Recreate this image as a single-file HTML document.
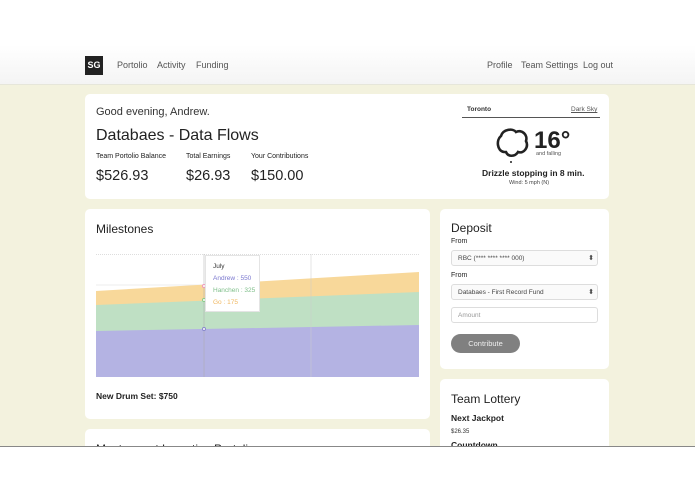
<!DOCTYPE html>
<html><head><meta charset="utf-8"><style>
*{margin:0;padding:0;box-sizing:border-box}
body{width:695px;height:494px;overflow:hidden;background:#fff;font-family:"Liberation Sans",sans-serif;color:#333;position:relative}
.a{position:absolute;white-space:nowrap}
.nav{left:0;top:45px;width:695px;height:40px;background:linear-gradient(#fff,#f4f4f4);border-bottom:1px solid #e6e6da}
.bg{left:0;top:85px;width:695px;height:361px;background:#f3f2de}
.card{background:#fff;border-radius:5px}
.nl{font-size:9px;color:#555;top:60px}
.lbl{font-size:7px;color:#222}
.sel{left:451px;width:147px;height:16px;border:1px solid #ddd;border-radius:3px;font-size:6.5px;padding:4px 6px;color:#444;background:#fafafa}
.sel:after{content:"⬍";position:absolute;right:3px;top:3px;font-size:7px}
</style></head><body>
<div class="a nav"></div>
<div class="a" style="left:85px;top:56px;width:18px;height:19px;background:#222;color:#fff;font-weight:bold;font-size:9px;text-align:center;line-height:19px">SG</div>
<div class="a nl" style="left:117px">Portolio</div>
<div class="a nl" style="left:157px">Activity</div>
<div class="a nl" style="left:196px">Funding</div>
<div class="a nl" style="left:487px">Profile</div>
<div class="a nl" style="left:521px">Team Settings</div>
<div class="a nl" style="left:583px">Log out</div>
<div class="a bg"></div>

<div class="a card" style="left:85px;top:94px;width:524px;height:105px"></div>
<div class="a" style="left:96px;top:106px;font-size:11px">Good evening, Andrew.</div>
<div class="a" style="left:96px;top:127px;font-size:16px;color:#222">Databaes - Data Flows</div>
<div class="a lbl" style="left:96px;top:153px">Team Portolio Balance</div>
<div class="a lbl" style="left:186px;top:153px">Total Earnings</div>
<div class="a lbl" style="left:251px;top:153px">Your Contributions</div>
<div class="a" style="left:96px;top:168px;font-size:14.5px;color:#222">$526.93</div>
<div class="a" style="left:186px;top:168px;font-size:14.5px;color:#222">$26.93</div>
<div class="a" style="left:251px;top:168px;font-size:14.5px;color:#222">$150.00</div>
<div class="a" style="left:462px;top:105px;width:138px;height:13px;border-bottom:1px solid #555"></div>
<div class="a" style="left:467px;top:106px;font-size:6.5px;font-weight:bold">Toronto</div>
<div class="a" style="left:571px;top:106px;font-size:6.5px;text-decoration:underline;color:#555">Dark Sky</div>
<svg class="a" style="left:494px;top:126px" width="36" height="40" viewBox="0 0 36 40"><path d="M10 26 C3 25 2 14 7 10 C9 3 19 2 22 6 C28 3 34 9 32 15 C35 21 30 28 24 26 C21 31 14 31 12 26 Z" fill="none" stroke="#222" stroke-width="2.6"/><circle cx="17" cy="36" r="1" fill="#222"/></svg>
<div class="a" style="left:534px;top:127px;font-size:24px;font-weight:bold;color:#222">16°</div>
<div class="a" style="left:536px;top:151px;font-size:5.5px;color:#555">and falling</div>
<div class="a" style="left:482px;top:168px;font-size:8.5px;font-weight:bold;color:#222">Drizzle stopping in 8 min.</div>
<div class="a" style="left:509px;top:180px;font-size:5.5px;color:#444">Wind: 5 mph (N)</div>

<div class="a card" style="left:85px;top:209px;width:345px;height:210px"></div>
<div class="a" style="left:96px;top:222px;font-size:12px;color:#222">Milestones</div>
<svg class="a" style="left:96px;top:254px" width="323" height="123">
<rect width="323" height="123" fill="#fff"/>
<line x1="0" y1="0.5" x2="323" y2="0.5" stroke="#ddd" stroke-dasharray="1 1"/>
<line x1="0" y1="31" x2="323" y2="31" stroke="#eee"/>
<polygon points="0,37 323,18 323,123 0,123" fill="#f8d89a"/>
<polygon points="0,51 323,38 323,123 0,123" fill="#bfe0c4"/>
<polygon points="0,77 323,71 323,123 0,123" fill="#b4b3e3"/>
<line x1="108" y1="0" x2="108" y2="123" stroke="#aaa" stroke-width="0.5"/>
<line x1="215" y1="0" x2="215" y2="123" stroke="#ccc" stroke-width="0.5"/>
<circle cx="108" cy="32" r="1.5" fill="#fff" stroke="#e9b"/><circle cx="108" cy="46" r="1.5" fill="#fff" stroke="#8c8"/><circle cx="108" cy="75" r="1.5" fill="#fff" stroke="#88c"/>
</svg>
<div class="a" style="left:205px;top:255px;width:55px;height:57px;background:#fff;border:1px solid #e4e4e4;font-size:6.5px;padding:5px 7px;line-height:12px">
<div style="color:#333">July</div><div style="color:#7a77cf">Andrew : 550</div><div style="color:#7fbf8a">Hanchen : 325</div><div style="color:#f0b862">Go : 175</div></div>
<div class="a" style="left:96px;top:391px;font-size:8.5px;font-weight:bold;color:#222">New Drum Set: $750</div>

<div class="a card" style="left:85px;top:429px;width:345px;height:30px"></div>
<div class="a" style="left:96px;top:442px;font-size:12px;color:#222">Most recent Lucrative Portolio</div>

<div class="a card" style="left:440px;top:209px;width:169px;height:160px"></div>
<div class="a" style="left:451px;top:221px;font-size:12px;color:#222">Deposit</div>
<div class="a lbl" style="left:451px;top:238px">From</div>
<div class="a sel" style="top:250px">RBC (**** **** **** 000)</div>
<div class="a lbl" style="left:451px;top:272px">From</div>
<div class="a sel" style="top:284px">Databaes - First Record Fund</div>
<div class="a" style="left:451px;top:307px;width:147px;height:16px;border:1px solid #ddd;border-radius:3px;font-size:6.5px;padding:4px 6px;color:#999">Amount</div>
<div class="a" style="left:451px;top:334px;width:69px;height:19px;border-radius:10px;background:#808080;color:#eee;font-size:7.5px;text-align:center;line-height:19px">Contribute</div>

<div class="a card" style="left:440px;top:379px;width:169px;height:80px"></div>
<div class="a" style="left:451px;top:392px;font-size:12px;color:#222">Team Lottery</div>
<div class="a" style="left:451px;top:413px;font-size:8.5px;font-weight:bold;color:#222">Next Jackpot</div>
<div class="a" style="left:451px;top:429px;font-size:6px">$26.35</div>
<div class="a" style="left:451px;top:440px;font-size:8.5px;font-weight:bold;color:#222">Countdown</div>

<div class="a" style="left:0;top:446px;width:695px;height:48px;background:#fff;border-top:1px solid #888"></div>
</body></html>
